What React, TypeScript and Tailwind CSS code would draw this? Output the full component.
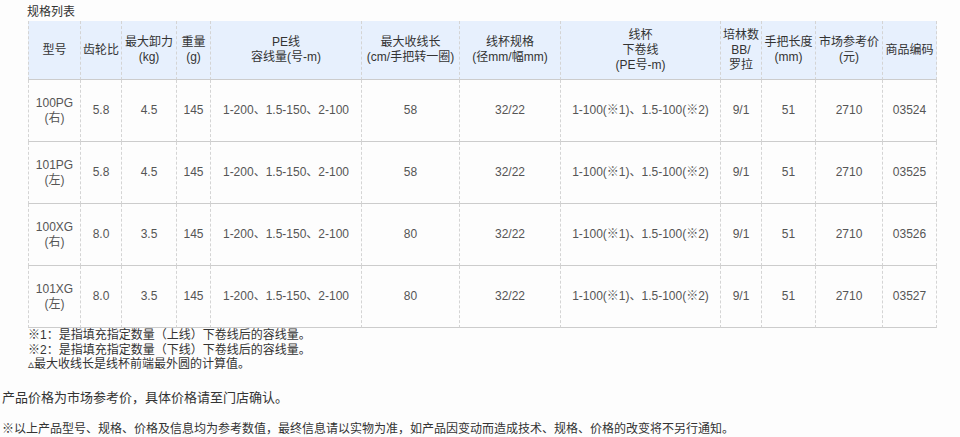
const cols = [53, 41, 55, 34, 151, 98, 101, 160, 41, 54, 67, 54]

const headers: string[][] = [
  ["型号"],
  ["齿轮比"],
  ["最大卸力", "(kg)"],
  ["重量", "(g)"],
  ["PE线", "容线量(号-m)"],
  ["最大收线长", "(cm/手把转一圈)"],
  ["线杯规格", "(径mm/幅mm)"],
  ["线杯", "下卷线", "(PE号-m)"],
  ["培林数", "BB/", "罗拉"],
  ["手把长度", "(mm)"],
  ["市场参考价", "(元)"],
  ["商品编码"],
]

const rows = [
  { model: ["100PG", "(右)"], ratio: "5.8", drag: "4.5", weight: "145", pe: "1-200、1.5-150、2-100", len: "58", spool: "32/22", under: "1-100(※1)、1.5-100(※2)", bb: "9/1", handle: "51", price: "2710", code: "03524" },
  { model: ["101PG", "(左)"], ratio: "5.8", drag: "4.5", weight: "145", pe: "1-200、1.5-150、2-100", len: "58", spool: "32/22", under: "1-100(※1)、1.5-100(※2)", bb: "9/1", handle: "51", price: "2710", code: "03525" },
  { model: ["100XG", "(右)"], ratio: "8.0", drag: "3.5", weight: "145", pe: "1-200、1.5-150、2-100", len: "80", spool: "32/22", under: "1-100(※1)、1.5-100(※2)", bb: "9/1", handle: "51", price: "2710", code: "03526" },
  { model: ["101XG", "(左)"], ratio: "8.0", drag: "3.5", weight: "145", pe: "1-200、1.5-150、2-100", len: "80", spool: "32/22", under: "1-100(※1)、1.5-100(※2)", bb: "9/1", handle: "51", price: "2710", code: "03527" },
]

export default function App() {
  return (
    <div
      className="w-[960px] h-[437px] bg-[#fdfdfd] text-[#333] overflow-hidden"
      style={{ fontFamily: '"Liberation Sans", Arial, "Noto Sans CJK SC", sans-serif' }}
    >
      <div className="pl-[27px] pt-[4px] text-[12px] leading-[17px]">规格列表</div>

      <table className="ml-[28px] w-[909px] table-fixed border-separate border-spacing-0 text-[12px] leading-[15px] text-center">
        <colgroup>
          {cols.map((w, i) => (
            <col key={i} style={{ width: w }} />
          ))}
        </colgroup>
        <thead>
          <tr className="h-[59px] bg-[#e7f0fd]">
            {headers.map((lines, i) => (
              <th
                key={i}
                className={`font-normal p-0 align-middle border-b border-b-[#cccccc] border-r border-dashed border-r-[#d4d4d4] ${i === 0 ? "border-l border-l-[#d4d4d4]" : ""}`}
                style={{ borderBottomStyle: "solid" }}
              >
                {lines.map((l, j) => (
                  <div key={j}>{l}</div>
                ))}
              </th>
            ))}
          </tr>
        </thead>
        <tbody className="text-[#555]">
          {rows.map((r) => {
            const cells = [r.ratio, r.drag, r.weight, r.pe, r.len, r.spool, r.under, r.bb, r.handle, r.price, r.code]
            return (
              <tr key={r.code} className="h-[62px]">
                <td
                  className="p-0 align-middle border-b border-b-[#cccccc] border-r border-l border-dashed border-r-[#d4d4d4] border-l-[#d4d4d4]"
                  style={{ borderBottomStyle: "solid" }}
                >
                  <div>{r.model[0]}</div>
                  <div>{r.model[1]}</div>
                </td>
                {cells.map((c, i) => (
                  <td
                    key={i}
                    className="p-0 align-middle border-b border-b-[#cccccc] border-r border-dashed border-r-[#d4d4d4]"
                    style={{ borderBottomStyle: "solid" }}
                  >
                    {c}
                  </td>
                ))}
              </tr>
            )
          })}
        </tbody>
      </table>

      <div className="pl-[28px] text-[12px] leading-[14.5px]">
        <div>※1：是指填充指定数量（上线）下卷线后的容线量。</div>
        <div>※2：是指填充指定数量（下线）下卷线后的容线量。</div>
        <div>▵最大收线长是线杯前端最外圆的计算值。</div>
      </div>

      <p className="pl-[2px] mt-[18px] text-[13px] leading-[15px]">产品价格为市场参考价，具体价格请至门店确认。</p>

      <p className="pl-[2px] mt-[17px] text-[12px] leading-[15px]">
        ※以上产品型号、规格、价格及信息均为参考数值，最终信息请以实物为准，如产品因变动而造成技术、规格、价格的改变将不另行通知。
      </p>
    </div>
  )
}
